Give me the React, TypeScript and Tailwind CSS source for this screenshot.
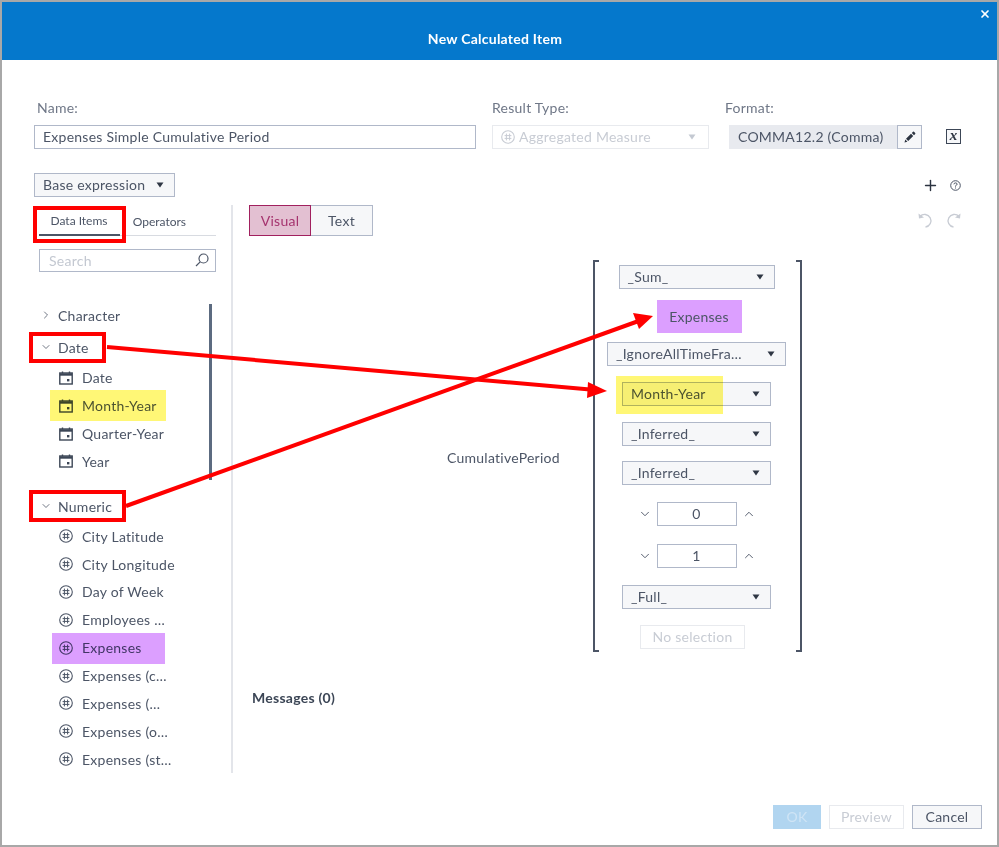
import { ChevronDown, ChevronRight, ChevronUp, Plus, X } from "lucide-react";

const field = "border border-[#b0b8c9]";
const selectBox =
  "flex h-[24px] items-center justify-between border border-[#b0b8c9] bg-[#f6f7f9] pb-[1px] pl-[8px] pr-[10px] text-[#4c5566]";

function Caret({ light }: { light?: boolean }) {
  return (
    <svg width="8" height="6" viewBox="0 0 8 6" className="shrink-0">
      <path d="M0.5 0.5H7.5L4 5.5Z" fill={light ? "#c4c9d2" : "#2f3744"} />
    </svg>
  );
}

function NumberIcon({ light }: { light?: boolean }) {
  const c = light ? "#c8ccd4" : "#4c5566";
  return (
    <svg width="14" height="14" viewBox="0 0 14 14" fill="none" stroke={c} className="shrink-0">
      <circle cx="7" cy="7" r="6.3" strokeWidth="1.1" />
      <path d="M5.4 3.6V10.4M8.6 3.6V10.4M3.6 5.6H10.4M3.6 8.4H10.4" strokeWidth="1" />
    </svg>
  );
}

function CalendarIcon() {
  return (
    <svg width="14" height="14" viewBox="0 0 14 14" fill="none" className="shrink-0">
      <rect x="0.8" y="2" width="12.4" height="11" stroke="#3c4656" strokeWidth="1.4" />
      <path d="M1 3.5H13" stroke="#3c4656" strokeWidth="2.4" />
      <path d="M3.5 0.5V2.5M10.5 0.5V2.5" stroke="#3c4656" strokeWidth="1.4" />
      <rect x="8" y="8" width="2.4" height="2.4" fill="#3c4656" />
    </svg>
  );
}

function Select({ label, width, className }: { label: string; width: string; className?: string }) {
  return (
    <div className={`${selectBox} ${width} ${className ?? ""}`}>
      <span>{label}</span>
      <Caret />
    </div>
  );
}

function Stepper({ value, className }: { value: string; className?: string }) {
  return (
    <div className={`flex items-center gap-[5px] text-[#4c5566] ${className ?? ""}`}>
      <ChevronDown size={14} strokeWidth={1.6} />
      <div className={`${field} flex h-[24px] w-[80px] items-center justify-center bg-white pb-[1px]`}>{value}</div>
      <ChevronUp size={14} strokeWidth={1.6} />
    </div>
  );
}

const dateItems = ["Date", "Month-Year", "Quarter-Year", "Year"];
const numericItems = [
  "City Latitude",
  "City Longitude",
  "Day of Week",
  "Employees …",
  "Expenses",
  "Expenses (c…",
  "Expenses (…",
  "Expenses (o…",
  "Expenses (st…",
];

function TreeGroup({ label, className, open }: { label: string; className: string; open?: boolean }) {
  return (
    <div className={`flex h-[20px] items-center gap-[6px] pl-[10px] ${className}`}>
      {open ? (
        <ChevronDown size={12} strokeWidth={1.6} className="text-[#4c5566]" />
      ) : (
        <ChevronRight size={12} strokeWidth={1.6} className="text-[#4c5566]" />
      )}
      <span>{label}</span>
    </div>
  );
}

function TreeItem({ label, icon }: { label: string; icon: React.ReactNode }) {
  return (
    <div className="flex h-[27.85px] items-center gap-[9px] pl-[29px]">
      {icon}
      <span>{label}</span>
    </div>
  );
}

function Annotations() {
  return (
    <>
      <div className="absolute left-[50px] top-[390px] h-[31px] w-[116px] bg-[#fff776] mix-blend-multiply" />
      <div className="absolute left-[616px] top-[376px] h-[38px] w-[107px] bg-[#fff776] mix-blend-multiply" />
      <div className="absolute left-[52px] top-[633px] h-[31px] w-[113px] bg-[#dc9fff] mix-blend-multiply" />
      <div className="absolute left-[33px] top-[206px] h-[37px] w-[93px] border-4 border-[#ff0000]" />
      <div className="absolute left-[29px] top-[332px] h-[31px] w-[77px] border-4 border-[#ff0000]" />
      <div className="absolute left-[29px] top-[490px] h-[32px] w-[97px] border-4 border-[#ff0000]" />
      <svg width="999" height="847" className="pointer-events-none absolute left-0 top-0">
        <path d="M107 347L590 389.5" stroke="#ff0000" strokeWidth="4" />
        <path d="M607 391L588 382L587 398Z" fill="#ff0000" />
        <path d="M126 506L640 320.5" stroke="#ff0000" strokeWidth="4" />
        <path d="M653 316L633 313L639 329Z" fill="#ff0000" />
      </svg>
    </>
  );
}

export default function App() {
  return (
    <div
      className="relative h-[847px] w-[999px] overflow-hidden border-2 border-[#a8a8a8] bg-white text-[14px] tracking-[0.25px] text-[#4c5566]"
      style={{ fontFamily: "Lato, 'Noto Sans', sans-serif" }}
    >
      {/* Header */}
      <header className="relative flex h-[58px] items-center justify-center bg-[#0578cc] pr-[9px] pt-[14px] text-[14px] font-bold text-white">
        New Calculated Item
        <X size={12} strokeWidth={3.4} className="absolute right-[6px] top-[6px]" />
      </header>

      {/* Name / result type / format */}
      <div className="mt-[38px] flex pl-[32px]">
        <div className="w-[442px]">
          <div className="h-[19px] pl-[3px] leading-[19px] text-[#6f7787]">Name:</div>
          <div className={`${field} mt-[8px] flex h-[24px] items-center pb-[1px] pl-[8px]`}>
            Expenses Simple Cumulative Period
          </div>
        </div>
        <div className="ml-[16px] w-[217px]">
          <div className="h-[19px] leading-[19px] text-[#6f7787]">Result Type:</div>
          <div className="mt-[8px] flex h-[24px] items-center gap-[4px] border border-[#e8eaee] pb-[1px] pl-[8px] pr-[12px] text-[#c8ccd4]">
            <NumberIcon light />
            <span className="flex-1">Aggregated Measure</span>
            <Caret light />
          </div>
        </div>
        <div className="ml-[16px]">
          <div className="h-[19px] leading-[19px] text-[#6f7787]">Format:</div>
          <div className="ml-[4px] mt-[8px] flex h-[24px] items-center">
            <div className="flex h-full w-[168px] items-center bg-[#e8eaef] pb-[1px] pl-[9px]">COMMA12.2 (Comma)</div>
            <div className={`${field} flex h-full w-[25px] items-center justify-center bg-[#f6f7f9]`}>
              <svg width="12" height="12" viewBox="0 0 12 12" fill="#2b3340">
                <path d="M0.5 11.5L1.3 8.6L3.4 10.7ZM2 7.8L7 2.8L9.2 5L4.2 10ZM7.8 2L9 0.8Q9.5 0.4 10 0.8L11.2 2Q11.6 2.5 11.2 3L10 4.2Z" />
              </svg>
            </div>
            <div className="mb-[2px] ml-[24px] flex h-[15px] w-[15px] items-center justify-center border border-[#3c4656] bg-[#f6f7f9] pb-[2px] font-['Liberation_Serif',serif] text-[15px] font-bold italic leading-none text-[#2b3340]">
              x
            </div>
          </div>
        </div>
      </div>

      {/* Expression type + help */}
      <div className="mt-[24px] flex items-center pl-[32px] pr-[36px]">
        <Select label="Base expression" width="w-[141px]" />
        <Plus size={17} strokeWidth={2} className="ml-auto text-[#2b3340]" />
        <svg width="11" height="11" viewBox="0 0 11 11" fill="none" stroke="#4c5566" className="ml-[11px]">
          <circle cx="5.5" cy="5.5" r="4.8" />
          <path d="M3.9 4.3Q4 2.9 5.5 2.9Q7.1 2.9 7.1 4.2Q7.1 5 5.5 5.8V6.6M5.5 7.5V8.5" />
        </svg>
      </div>

      {/* Main split */}
      <div className="mt-[8px] flex h-[568px]">
        {/* Data item panel */}
        <div className="relative w-[231px] border-r-2 border-[#e3e5ea]">
          <div className="ml-[37px] w-[177px]">
            <div className="flex h-[31px] border-b border-[#d8dbe1] pt-[3px] text-[12px] tracking-normal">
              <div className="mb-[-1px] flex w-[81px] items-center justify-center border-b-2 border-[#4c5566] pr-[1px]">
                Data Items
              </div>
              <div className="flex w-[68px] items-center justify-end pr-[2px]">Operators</div>
            </div>
            <div className={`${field} mt-[13px] flex h-[23px] items-center justify-between pb-[1px] pl-[9px] pr-[6px] text-[#c3c8d1]`}>
              <span>Search</span>
              <svg width="14" height="14" viewBox="0 0 14 14" fill="none" stroke="#4c5566" strokeWidth="1.2">
                <circle cx="8.5" cy="5.5" r="4.5" />
                <path d="M5.2 8.8L1 13" />
              </svg>
            </div>
          </div>

          <div className="ml-[28px] w-[178px]">
            <TreeGroup label="Character" className="mt-[33px]" />
            <TreeGroup label="Date" className="mt-[12px]" open />
            <div className="mt-[7px]">
              {dateItems.map((d) => (
                <TreeItem key={d} label={d} icon={<CalendarIcon />} />
              ))}
            </div>
            <TreeGroup label="Numeric" className="mt-[21px]" open />
            <div className="mt-[6px]">
              {numericItems.map((n) => (
                <TreeItem key={n} label={n} icon={<NumberIcon />} />
              ))}
            </div>
          </div>
          <div className="absolute left-[207px] top-[99px] h-[176px] w-[3px] bg-[#5c6b80]" />
        </div>

        {/* Visual editor */}
        <div className="flex-1 pl-[16px]">
          <div className="flex items-start">
            <div className="flex h-[31px] w-[62px] items-center justify-center border border-[#a1205e] bg-[#e3c0d2] text-[#a5336e]">
              Visual
            </div>
            <div className={`${field} flex h-[31px] w-[62px] items-center justify-center border-l-0 bg-[#f6f7f9]`}>
              Text
            </div>
            <div className="ml-auto mr-[35px] mt-[7px] flex gap-[11px]">
              <svg width="17" height="17" viewBox="0 0 17 17" fill="none" stroke="#c8ccd4" strokeWidth="1.3">
                <path d="M3 4.5A6.3 6.3 0 1 1 8.5 15" />
                <path d="M1.5 1.5L2 6.5L7 5.5Z" fill="#c8ccd4" stroke="none" />
              </svg>
              <svg width="17" height="17" viewBox="0 0 17 17" fill="none" stroke="#c8ccd4" strokeWidth="1.3">
                <path d="M14 4.5A6.3 6.3 0 1 0 8.5 15" />
                <path d="M15.5 1.5L15 6.5L10 5.5Z" fill="#c8ccd4" stroke="none" />
              </svg>
            </div>
          </div>

          <div className="mt-[24px] flex items-center pl-[198px]">
            <span className="mt-[3px] w-[146px]">CumulativePeriod</span>
            <div className="flex h-[392px] w-[209px]">
              <div className="w-[6px] border-y-2 border-l-2 border-[#4c5566]" />
              <div className="flex flex-1 flex-col items-center pr-[2px] pt-[5px]">
                <Select label="_Sum_" width="w-[156px]" />
                <div className="ml-[5px] mt-[11px] flex h-[33px] w-[85px] items-center justify-center bg-[#dc9fff] pb-[1px]">
                  Expenses
                </div>
                <Select label="_IgnoreAllTimeFra…" width="w-[179px]" className="mt-[9px]" />
                <Select label="Month-Year" width="w-[149px]" className="mt-[16px]" />
                <Select label="_Inferred_" width="w-[149px]" className="mt-[16px]" />
                <Select label="_Inferred_" width="w-[149px]" className="mt-[15px]" />
                <Stepper value="0" className="mt-[17px]" />
                <Stepper value="1" className="mt-[18px]" />
                <Select label="_Full_" width="w-[149px]" className="mt-[17px]" />
                <div className="mr-[8px] mt-[16px] flex h-[24px] w-[105px] items-center justify-center border border-[#e8eaee] pb-[1px] text-[#c8ccd4]">
                  No selection
                </div>
              </div>
              <div className="w-[6px] border-y-2 border-r-2 border-[#4c5566]" />
            </div>
          </div>

          <div className="mt-[35px] pl-[3px] font-bold text-[#3c4656]">Messages (0)</div>
        </div>
      </div>

      {/* Footer */}
      <div className="mt-[32px] flex justify-end gap-[8px] pr-[15px]">
        <div className="flex h-[24px] w-[48px] items-center justify-center bg-[#b1d5f0] pb-[1px] text-[#cfe4f5]">OK</div>
        <div className="flex h-[24px] w-[75px] items-center justify-center border border-[#e8eaee] pb-[1px] text-[#c8ccd4]">
          Preview
        </div>
        <div className={`${field} flex h-[24px] w-[70px] items-center justify-center bg-[#f6f7f9] pb-[1px]`}>Cancel</div>
      </div>

      <div className="absolute -left-[2px] -top-[2px] h-[847px] w-[999px]">
        <Annotations />
      </div>
    </div>
  );
}
